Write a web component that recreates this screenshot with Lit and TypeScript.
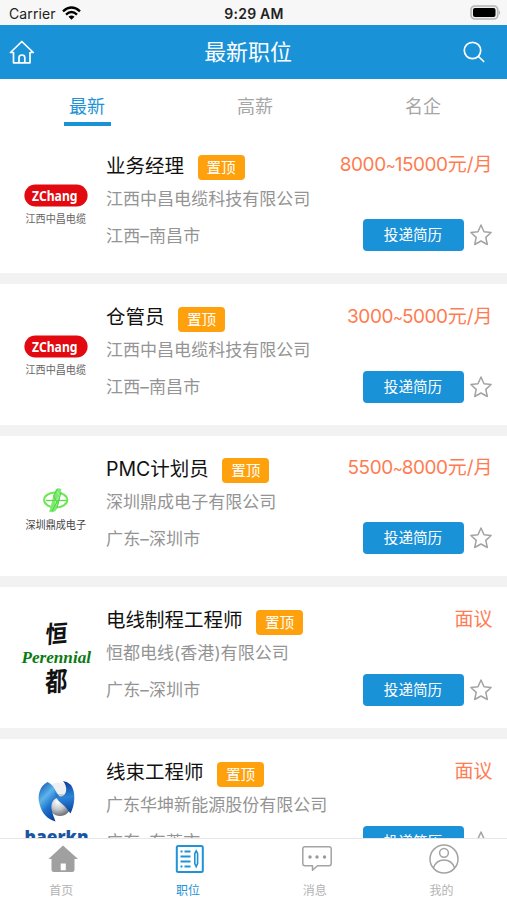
import { LitElement, html, css, svg } from "lit";
import { customElement, property } from "lit/decorators.js";
import { classMap } from "lit/directives/class-map.js";

type Brand = "zchang" | "dingcheng" | "perennial" | "haerkn";

interface Job {
  title: string;
  salary: string[];
  unit: string;
  company: string;
  city: string;
  brand: Brand;
}

const JOBS: Job[] = [
  { title: "业务经理", salary: ["8000", "15000"], unit: "元/月", company: "江西中昌电缆科技有限公司", city: "江西–南昌市", brand: "zchang" },
  { title: "仓管员", salary: ["3000", "5000"], unit: "元/月", company: "江西中昌电缆科技有限公司", city: "江西–南昌市", brand: "zchang" },
  { title: "PMC计划员", salary: ["5500", "8000"], unit: "元/月", company: "深圳鼎成电子有限公司", city: "广东–深圳市", brand: "dingcheng" },
  { title: "电线制程工程师", salary: [], unit: "面议", company: "恒都电线(香港)有限公司", city: "广东–深圳市", brand: "perennial" },
  { title: "线束工程师", salary: [], unit: "面议", company: "广东华坤新能源股份有限公司", city: "广东–东莞市", brand: "haerkn" },
];

@customElement("company-logo")
export class CompanyLogo extends LitElement {
  @property() brand: Brand = "zchang";

  static styles = css`
    :host { display: block; width: 74px; height: 84px; }
    svg { display: block; overflow: visible; }
    .cjk { font-family: "Noto Sans CJK SC", sans-serif; }
    .pill { font-family: "Noto Sans", sans-serif; font-weight: 700; }
    .serif { font-family: "Liberation Serif", serif; font-weight: 700; font-style: italic; }
    .sans { font-family: "Open Sans", sans-serif; font-weight: 800; }
  `;

  private art() {
    switch (this.brand) {
      case "zchang":
        return svg`
          <rect x="5.4" y="22.5" width="63.2" height="22" rx="11" fill="#e20a10" />
          <text class="pill" x="13" y="38.5" font-size="13.5" fill="#fff" textLength="45.5" lengthAdjust="spacingAndGlyphs">ZChang</text>
          <text class="cjk" x="6.5" y="60.5" font-size="11" fill="#666" textLength="60.5" lengthAdjust="spacingAndGlyphs">江西中昌电缆</text>`;
      case "dingcheng":
        return svg`
          <ellipse cx="36.7" cy="35" rx="11.6" ry="7.6" fill="none" stroke="#6be852" stroke-width="2" />
          <path d="M30 46.500C33 41 33.500 29 37 24.500Q39.500 22 42.500 24.500C40 30 41 41 36.500 46Q34 48 30 46.500Z" fill="#7fe873" />
          <path d="M27 35.500H47.500" stroke="#5fd94c" stroke-width="1.300" />
          <path d="M37.500 26L41 31L36 37L39.500 42" fill="none" stroke="#b2f3aa" stroke-width="1" />
          <path d="M38.500 24L34.500 31L38 37L33 46M42 27L38 43" fill="none" stroke="#45d83c" stroke-width="1" />
          <text class="cjk" x="6.5" y="64" font-size="11.500" fill="#444" textLength="60.5" lengthAdjust="spacingAndGlyphs">深圳鼎成电子</text>`;
      case "perennial":
        return svg`
          <text class="cjk" transform="translate(26 27.500) skewX(-8) rotate(-5) scale(.95 1.050)" font-size="23" font-weight="600" fill="#111">恒</text>
          <text class="serif" x="2.5" y="46.500" font-size="17.5" fill="#0b7a12" textLength="69.5" lengthAdjust="spacingAndGlyphs">Perennial</text>
          <text class="cjk" transform="translate(26 76) skewX(-6) rotate(-5) scale(.92 1.120)" font-size="24" font-weight="600" fill="#111">都</text>`;
      case "haerkn":
        return svg`
          <defs>
            <linearGradient id="left" x1=".1" y1="0" x2=".7" y2="1">
              <stop offset="0" stop-color="#0f55b4" /><stop offset=".35" stop-color="#5db4ea" />
              <stop offset=".6" stop-color="#1e74cc" /><stop offset="1" stop-color="#0a3795" />
            </linearGradient>
            <linearGradient id="right" x1=".5" y1="0" x2=".6" y2="1">
              <stop offset="0" stop-color="#0a3795" /><stop offset=".5" stop-color="#2b85d8" /><stop offset="1" stop-color="#0a3f9f" />
            </linearGradient>
            <radialGradient id="ball" cx=".4" cy=".35" r=".65">
              <stop offset="0" stop-color="#fff" /><stop offset=".55" stop-color="#c4c6c9" /><stop offset="1" stop-color="#6f7277" />
            </radialGradient>
          </defs>
          <circle cx="40" cy="28" r="13.500" fill="#eef0f2" />
          <circle cx="41" cy="37" r="11" fill="url(#ball)" />
          <path d="M28.500 14C21 18 18 27 20.500 36C23 46 29 51.500 36.500 53.500C34.500 47 30 39 34 33C36.500 29.500 40 29 43 30.500C37 27 36 17 28.500 14Z" fill="url(#left)" />
          <path d="M44 13C49 19 48 27 42.500 28.500C39.500 29 37.500 26.500 36 24C37 29 38 32 42 35C47 39 49 42 51.500 45.500C56 37 57 24 52 17Q48.500 13.500 44 13Z" fill="url(#right)" />
          <text class="sans" x="5.5" y="74.500" font-size="17" fill="#1a55a3" textLength="64" lengthAdjust="spacingAndGlyphs">haerkn</text>`;
    }
  }

  render() {
    return html`<svg width="74" height="84" viewBox="0 0 74 84">${this.art()}</svg>`;
  }
}

@customElement("job-card")
export class JobCard extends LitElement {
  @property({ attribute: false }) job!: Job;

  static styles = css`
    :host {
      display: flex;
      box-sizing: border-box;
      height: 140.6px;
      padding: 0 14.5px 0 19px;
      background: #fff;
      font-family: Inter, "Noto Sans CJK SC", sans-serif;
    }
    company-logo { margin-top: 29px; flex: none; }
    .body { flex: 1; margin-left: 13px; padding-top: 18px; min-width: 0; }
    .row { display: flex; align-items: center; white-space: nowrap; }
    .head { height: 30px; }
    .title { font-size: 19.5px; line-height: 30px; color: #111; }
    .badge {
      margin: 4px 0 0 13.5px;
      width: 47px; height: 25px;
      border-radius: 4px;
      background: #ffa10d;
      color: #fff;
      font-size: 14.6px; line-height: 26px;
      text-align: center;
    }
    .salary { margin-left: auto; font-size: 19px; line-height: 30px; color: #ff7c52; }
    .num { letter-spacing: -.45px; }
    .tilde { font-size: 15px; letter-spacing: -1px; }
    .company { height: 33px; font-size: 17.05px; color: #949494; }
    .foot { height: 43px; font-size: 17.05px; color: #949494; }
    .city { letter-spacing: .1px; margin-top: -2px; }
    .apply {
      margin-left: auto;
      width: 101px; height: 32px;
      border-radius: 4px;
      background: #1a92d8;
      color: #fff;
      font-size: 14.6px; line-height: 33px;
      text-align: center;
    }
    .star { margin: 0 0 0 5px; flex: none; display: block; }
  `;

  render() {
    const { title, salary, unit, company, city, brand } = this.job;
    return html`
      <company-logo .brand=${brand}></company-logo>
      <div class="body">
        <div class="row head">
          <span class="title">${title}</span>
          <span class="badge">置顶</span>
          <span class="salary">${salary.length
            ? html`<span class="num">${salary[0]}<span class="tilde">~</span>${salary[1]}</span>`
            : ""}${unit}</span>
        </div>
        <div class="row company">${company}</div>
        <div class="row foot">
          <span class="city">${city}</span>
          <span class="apply">投递简历</span>
          <svg class="star" width="24" height="24" viewBox="0 0 24 24" fill="none" stroke="#a3a3a3" stroke-width="1.5" stroke-linejoin="round">
            <path d="M12 2L15 8.700L22.100 9.500L16.800 14.400L18.300 21.500L12 18L5.700 21.500L7.200 14.400L1.900 9.500L9 8.700Z" />
          </svg>
        </div>
      </div>`;
  }
}

const TAB_ICONS = {
  home: svg`<path fill-rule="evenodd" d="M16 2.500L31 16H27.500V26.500Q27.500 29 25 29H7Q4.500 29 4.500 26.500V16H1.500ZM13.700 20.500V27.200H18.800V20.500Z" fill="#a0a0a0" />`,
  jobs: svg`
    <g fill="none" stroke="#1f93d5" stroke-width="2">
      <rect x="2.800" y="3" width="26" height="26" rx="1.500" />
      <path d="M6.500 8.500H8.500M10.500 8.500H16.500M6.500 13.500H16.500M6.500 18.500H16.500M6.500 23.500H8.500M10.500 23.500H16.500" />
      <path d="M20.800 10.500L22.200 8L23.600 10.500V20.500L22.200 23.500L20.800 20.500Z" stroke-width="1.600" />
    </g>`,
  chat: svg`
    <path d="M4 3.800H28Q30.200 3.800 30.200 6V20.500Q30.200 22.700 28 22.700H16.500L11.500 27.200V22.700H4Q1.800 22.700 1.800 20.500V6Q1.800 3.800 4 3.800Z" fill="none" stroke="#a3a3a3" stroke-width="1.500" stroke-linejoin="round" />
    <g fill="#999"><circle cx="9" cy="14" r="1.700" /><circle cx="16" cy="14" r="1.700" /><circle cx="23.500" cy="14" r="1.700" /></g>`,
  me: svg`
    <g fill="none" stroke="#a3a3a3" stroke-width="1.500">
      <circle cx="16" cy="16" r="14" /><circle cx="16" cy="9.800" r="4.400" />
      <path d="M5.300 25C7.500 19 12 17 16 17S24.500 19 26.700 25" />
    </g>`,
};

@customElement("app-root")
export class AppRoot extends LitElement {
  static styles = css`
    :host {
      display: flex; flex-direction: column;
      width: 507px; height: 900px; overflow: hidden;
      background: #fff;
      font-family: Inter, "Noto Sans CJK SC", sans-serif;
    }
    svg { display: block; }
    .status {
      flex: none; height: 25px; box-sizing: border-box;
      display: grid; grid-template-columns: 1fr auto 1fr; align-items: center;
      padding: 2px 6px 0 9px;
      background: #f7f7f7; color: #222; font-size: 14px;
    }
    .carrier { display: flex; align-items: center; gap: 6px; letter-spacing: .1px; }
    .carrier svg { margin-top: -2px; }
    .time { font-weight: 600; font-size: 14px; letter-spacing: .25px; padding-right: 2px; }
    .battery { justify-self: end; margin-top: -2px; }
    .nav {
      flex: none; height: 54px; box-sizing: border-box;
      display: grid; grid-template-columns: 1fr auto 1fr; align-items: center;
      padding: 0 22px 0 9px;
      background: #1a92d8; color: #fff;
    }
    .heading { font-size: 21.9px; line-height: 52px; padding: 0 0 1px 2px; }
    .search { justify-self: end; }
    .tabs { flex: none; display: flex; height: 53.7px; }
    .tab { flex: 1; display: flex; flex-direction: column; align-items: center; color: #a6a6a6; font-size: 18px; line-height: 28px; padding-top: 13.5px; }
    .tab.on { color: #1f93d5; }
    .tab:first-child { padding-left: 3px; }
    .tab.on::after { content: ""; width: 47px; height: 4px; margin-top: 1.5px; background: #1a92d8; }
    .list { flex: 1; min-height: 0; overflow: hidden; display: flex; flex-direction: column; gap: 11px; background: #f2f2f2; }
    job-card { flex: none; }
    .bar { flex: none; height: 62.5px; box-sizing: border-box; display: flex; border-top: 1.5px solid #e6e6e6; background: #fff; }
    .item { flex: 1; display: flex; flex-direction: column; align-items: center; padding-top: 4px; color: #b3b3b3; font-size: 12px; line-height: 18px; gap: 7px; }
    .item span { padding-right: 4px; }
    .item.on { color: #1f93d5; }
  `;

  private readonly tabs = ["最新", "高薪", "名企"];
  private readonly items = [
    { label: "首页", icon: TAB_ICONS.home },
    { label: "职位", icon: TAB_ICONS.jobs },
    { label: "消息", icon: TAB_ICONS.chat },
    { label: "我的", icon: TAB_ICONS.me },
  ];

  render() {
    return html`
      <div class="status">
        <div class="carrier">
          <span>Carrier</span>
          <svg width="19" height="14" viewBox="0 0 19 14" fill="none" stroke="#000" stroke-width="2.4">
            <path d="M1 5.300Q9.500-2.300 18 5.300M4 8.600Q9.500 3.600 15 8.600" />
            <path d="M9.500 13.800L6.500 10.800Q9.500 8.200 12.500 10.800Z" fill="#000" stroke="none" />
          </svg>
        </div>
        <div class="time">9:29 AM</div>
        <svg class="battery" width="31" height="15" viewBox="0 0 31 15">
          <rect x="1" y="1" width="26.800" height="13" rx="3.800" fill="#eee" stroke="#b5b5b5" stroke-width="1.6" />
          <rect x="3" y="3" width="22.500" height="9" rx="2" fill="#000" />
          <path d="M29 5.200Q31 7.500 29 9.800Z" fill="#aaa" />
        </svg>
      </div>
      <div class="nav">
        <svg width="26" height="26" viewBox="0 0 26 26" fill="none" stroke="#fff" stroke-width="1.7" stroke-linejoin="round" stroke-linecap="round">
          <path d="M1.500 13.500L12.800 2.500L24.300 13.500H21V23.800H4.500V13.500ZM10 23.500V18.500Q10 16 12.900 16T15.800 18.500V23.500" />
        </svg>
        <div class="heading">最新职位</div>
        <svg class="search" width="22" height="22" viewBox="0 0 22 22" fill="none" stroke="#fff" stroke-width="1.7" stroke-linecap="round">
          <circle cx="9.500" cy="9.500" r="8.200" /><path d="M15.500 15.500L20.700 20.500" />
        </svg>
      </div>
      <div class="tabs">
        ${this.tabs.map((t, i) => html`<div class=${classMap({ tab: true, on: i === 0 })}>${t}</div>`)}
      </div>
      <div class="list">${JOBS.map((j) => html`<job-card .job=${j}></job-card>`)}</div>
      <div class="bar">
        ${this.items.map(
          (it, i) => html`<div class=${classMap({ item: true, on: i === 1 })}>
            <svg width="32" height="32" viewBox="0 0 32 32">${it.icon}</svg>
            <span>${it.label}</span>
          </div>`,
        )}
      </div>`;
  }
}
